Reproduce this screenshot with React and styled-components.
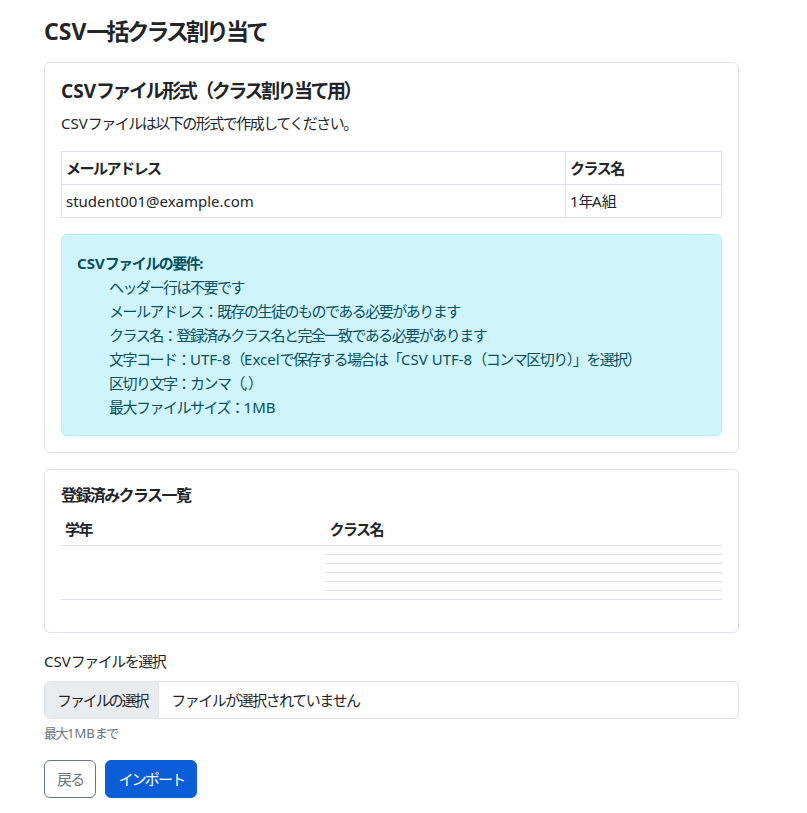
import React from "react";
import styled, { createGlobalStyle } from "styled-components";

const GlobalStyle = createGlobalStyle`
  html, body {
    margin: 0;
    padding: 0;
    background: #fff;
  }
  body {
    font-family: "Noto Sans", "Noto Sans CJK JP", sans-serif;
    font-size: 15px;
    line-height: 24px;
    color: #212529;
    letter-spacing: -0.1em;
  }
  * {
    box-sizing: border-box;
  }
`;

// Latin runs keep their natural spacing; only the Japanese glyphs are tightened
const Latin = styled.span`
  letter-spacing: 0;
`;

const T = ({ children }) =>
  String(children)
    .split(/([A-Za-z0-9@.\-, ]+)/)
    .map((part, i) =>
      i % 2 === 1 ? <Latin key={i}>{part}</Latin> : part
    );

const Page = styled.div`
  width: 695px;
  padding: 17px 0 24px;
  margin-left: 44px;
`;

const Title = styled.h1`
  margin: 0 0 16px;
  font-size: 23px;
  line-height: 29px;
  font-weight: 700;
  letter-spacing: -0.13em;
`;

const Card = styled.div`
  border: 1px solid #dee2e6;
  border-radius: 6px;
  padding: 16px;
  margin-bottom: 16px;
  background: #fff;
`;

const CardTitle = styled.h2`
  margin: 0 0 8px;
  font-size: ${(p) => (p.$small ? "16px" : "19px")};
  line-height: ${(p) => (p.$small ? "19px" : "24px")};
  font-weight: 700;
  letter-spacing: ${(p) => (p.$small ? "-0.1em" : "-0.13em")};
`;

const CardText = styled.p`
  margin: 0 0 16px;
`;

const Table = styled.table`
  width: 100%;
  border-collapse: collapse;
  margin-bottom: 16px;
`;

const Th = styled.th`
  text-align: left;
  font-weight: 700;
  padding: 4px;
  border: ${(p) => (p.$bordered ? "1px solid #dee2e6" : "none")};
  border-bottom: 1px solid #dee2e6;
  width: ${(p) => p.$width || "auto"};
`;

const Td = styled.td`
  padding: 4px;
  height: 9px;
  border: ${(p) => (p.$bordered ? "1px solid #dee2e6" : "none")};
  border-bottom: 1px solid #dee2e6;
  vertical-align: top;
`;

const Alert = styled.div`
  background: #cff4fc;
  border: 1px solid #b6effb;
  color: #055160;
  border-radius: 6px;
  padding: 16px 15px;
`;

const AlertHeading = styled.strong`
  display: block;
`;

const List = styled.ul`
  margin: 0;
  padding-left: 32px;
  list-style: none;
`;

const Label = styled.label`
  display: block;
  margin-bottom: 8px;
`;

const FileInput = styled.div`
  display: flex;
  height: 38px;
  border: 1px solid #dee2e6;
  border-radius: 6px;
  overflow: hidden;
`;

const FileButton = styled.span`
  display: flex;
  align-items: center;
  padding: 0 11px 0 12px;
  background: #e9ecef;
  border-right: 1px solid #dee2e6;
  letter-spacing: -0.14em;
`;

const FileName = styled.span`
  display: flex;
  align-items: center;
  padding: 0 12px;
`;

const Hint = styled.div`
  margin-top: 4px;
  font-size: 13px;
  line-height: 21px;
  color: #6c757d;
`;

const Actions = styled.div`
  display: flex;
  gap: 9px;
  margin-top: 16px;
`;

const Button = styled.button`
  font-family: inherit;
  font-size: 15px;
  line-height: 24px;
  letter-spacing: -0.12em;
  padding: 6px 12px;
  border-radius: 6px;
  border: 1px solid ${(p) => (p.$primary ? "#0b5ed7" : "#6c757d")};
  background: ${(p) => (p.$primary ? "#0b5ed7" : "#fff")};
  color: ${(p) => (p.$primary ? "#fff" : "#6c757d")};
`;

const requirements = [
  "ヘッダー行は不要です",
  "メールアドレス：既存の生徒のものである必要があります",
  "クラス名：登録済みクラス名と完全一致である必要があります",
  "文字コード：UTF-8（Excelで保存する場合は「CSV UTF-8（コンマ区切り）」を選択）",
  "区切り文字：カンマ（,）",
  "最大ファイルサイズ：1MB",
];

export default function App() {
  return (
    <>
      <GlobalStyle />
      <Page>
        <Title><T>CSV一括クラス割り当て</T></Title>

        <Card>
          <CardTitle><T>CSVファイル形式（クラス割り当て用）</T></CardTitle>
          <CardText><T>CSVファイルは以下の形式で作成してください。</T></CardText>
          <Table>
            <thead>
              <tr>
                <Th $bordered>メールアドレス</Th>
                <Th $bordered $width="156px">クラス名</Th>
              </tr>
            </thead>
            <tbody>
              <tr>
                <Td $bordered><T>student001@example.com</T></Td>
                <Td $bordered><T>1年A組</T></Td>
              </tr>
            </tbody>
          </Table>
          <Alert>
            <AlertHeading><T>CSVファイルの要件:</T></AlertHeading>
            <List>
              {requirements.map((r) => (
                <li key={r}><T>{r}</T></li>
              ))}
            </List>
          </Alert>
        </Card>

        <Card>
          <CardTitle $small>登録済みクラス一覧</CardTitle>
          <Table>
            <thead>
              <tr>
                <Th $width="40%">学年</Th>
                <Th>クラス名</Th>
              </tr>
            </thead>
            <tbody>
              {[0, 1, 2, 3, 4, 5].map((i) => (
                <tr key={i}>
                  {i === 0 && <Td rowSpan={6} />}
                  <Td />
                </tr>
              ))}
            </tbody>
          </Table>
        </Card>

        <Label><T>CSVファイルを選択</T></Label>
        <FileInput>
          <FileButton>ファイルの選択</FileButton>
          <FileName>ファイルが選択されていません</FileName>
        </FileInput>
        <Hint><T>最大1MBまで</T></Hint>

        <Actions>
          <Button>戻る</Button>
          <Button $primary>インポート</Button>
        </Actions>
      </Page>
    </>
  );
}
